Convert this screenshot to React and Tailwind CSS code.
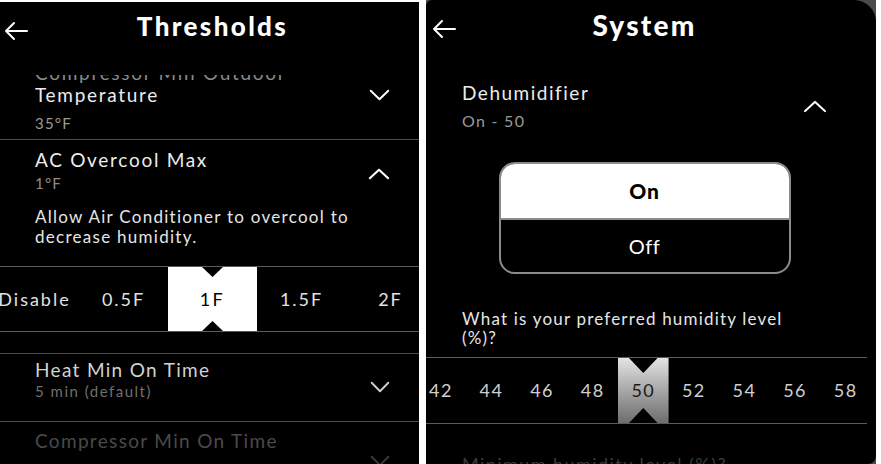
import React from "react";

const font = "font-['Lato','Open_Sans',sans-serif]";

function BackArrow() {
  return (
    <svg width="24" height="20" viewBox="0 0 24 20" fill="none">
      <path d="M23 10H2M10 2L2 10l8 8" stroke="white" strokeWidth="2" strokeLinecap="round" strokeLinejoin="round" />
    </svg>
  );
}

function Chevron({ up = false, color = "white", w = 21, h = 12 }) {
  return (
    <svg width={w} height={h} viewBox="0 0 24 14" fill="none" preserveAspectRatio="none">
      <path
        d={up ? "M2 12L12 2l10 10" : "M2 2l10 10 10-10"}
        stroke={color}
        strokeWidth="2.2"
        strokeLinecap="round"
        strokeLinejoin="round"
      />
    </svg>
  );
}

const overcoolSteps = ["Disable", "0.5F", "1F", "1.5F", "2F"];
const humiditySteps = [42, 44, 46, 48, 50, 52, 54, 56, 58];

function ThresholdsPanel() {
  return (
    <div className="w-[419px] h-[462px] mt-[2px] bg-black flex flex-col overflow-hidden shrink-0">
      <div className="grid grid-cols-[35px_1fr_29px] h-[73px] shrink-0 pt-[9px]">
        <div className="pl-[4px] pt-[10px]">
          <BackArrow />
        </div>
        <h1 className="text-center text-white text-[26px] leading-[30px] font-black tracking-[0.09em]">
          Thresholds
        </h1>
      </div>

      <div className="flex-1 overflow-hidden">
        {/* compressor min outdoor temp, partly scrolled under the header */}
        <div className="-mt-[13px] pl-[35px] pr-[29px] pb-[6px] border-b border-[#4d4d4d] flex justify-between items-start">
          <div>
            <div className="text-[19px] leading-[22px] tracking-[0.09em] text-[#8a8a8a]">Compressor Min Outdoor</div>
            <div className="text-[19px] leading-[22px] tracking-[0.09em] text-[#ececec]">Temperature</div>
            <div className="mt-[7px] text-[15px] leading-[20px] tracking-[0.08em] text-[#9a9a9a]">35°F</div>
          </div>
          <div className="mt-[27px]">
            <Chevron />
          </div>
        </div>

        {/* ac overcool max, expanded */}
        <div className="border-b border-[#4d4d4d] pb-[21px]">
          <div className="pt-[9px] pl-[35px] pr-[29px] flex justify-between items-start">
            <div>
              <div className="text-[19px] leading-[22px] tracking-[0.09em] text-[#ececec]">AC Overcool Max</div>
              <div className="mt-[2px] text-[15px] leading-[20px] tracking-[0.08em] text-[#8c8c8c]">1°F</div>
            </div>
            <div className="mt-[19px]">
              <Chevron up w={22} />
            </div>
          </div>
          <p className="mt-[14px] pl-[35px] pr-[29px] text-[17px] leading-[20px] tracking-[0.075em] text-[#e6e6e6]">
            Allow Air Conditioner to overcool to decrease humidity.
          </p>
          <div className="mt-[19px] h-[66px] border-y border-[#5a5a5a] overflow-hidden">
            <div className="flex h-full -ml-[10px]">
              {overcoolSteps.map((s) =>
                s === "1F" ? (
                  <div
                    key={s}
                    className="w-[89px] shrink-0 h-full bg-white text-black flex items-center justify-center text-[18px] tracking-[0.14em] [clip-path:polygon(0_0,34px_0,44.5px_10px,55px_0,100%_0,100%_100%,55px_100%,44.5px_calc(100%_-_10px),34px_100%,0_100%)]"
                  >
                    {s}
                  </div>
                ) : (
                  <div
                    key={s}
                    className="w-[89px] shrink-0 h-full text-[#e2e2e2] flex items-center justify-center text-[18px] tracking-[0.11em]"
                  >
                    {s}
                  </div>
                )
              )}
            </div>
          </div>
        </div>

        {/* heat min on time */}
        <div className="pt-[5px] pb-[20px] pl-[35px] pr-[29px] border-b border-[#4d4d4d] flex justify-between items-start">
          <div>
            <div className="text-[19px] leading-[22px] tracking-[0.07em] text-[#d2d2d2]">Heat Min On Time</div>
            <div className="text-[15px] leading-[20px] tracking-[0.1em] text-[#6f6f6f]">5 min (default)</div>
          </div>
          <div className="mt-[22px]">
            <Chevron color="#d0d0d0" w={20} />
          </div>
        </div>

        {/* compressor min on time, fading out at the bottom */}
        <div className="pt-[8px] pl-[35px] pr-[29px] flex justify-between items-start">
          <div className="text-[19px] leading-[22px] tracking-[0.07em] text-[#4a4a4a]">Compressor Min On Time</div>
          <div className="mt-[25px]">
            <Chevron color="#3a3a3a" w={20} />
          </div>
        </div>
      </div>
    </div>
  );
}

function SystemPanel() {
  return (
    <div className="w-[450px] h-[464px] ml-[7px] bg-[#4a4a4a] shrink-0">
      <div className="h-full bg-black rounded-tl-[6px] rounded-tr-[22px] rounded-br-[8px] flex flex-col overflow-hidden">
        <div className="grid grid-cols-[36px_1fr_49px] pt-[9px] shrink-0">
          <div className="pl-[6px] pt-[10px]">
            <BackArrow />
          </div>
          <h1 className="text-center text-white text-[28px] leading-[32px] font-black tracking-[0.08em]">System</h1>
        </div>

        <div className="pl-[36px] pr-[49px] flex flex-col">
          <div className="mt-[40px] flex justify-between items-start">
            <div>
              <div className="text-[19px] leading-[24px] tracking-[0.08em] text-[#ececec]">Dehumidifier</div>
              <div className="mt-[6px] text-[16px] leading-[20px] tracking-[0.08em] text-[#9a9a9a]">On - 50</div>
            </div>
            <div className="mt-[19px]">
              <Chevron up w={24} h={13} />
            </div>
          </div>

          <div className="mt-[31px] self-center w-[292px] h-[112px] rounded-[16px] border-2 border-[#8b8b8b] overflow-hidden flex flex-col">
            <div className="h-[54px] bg-white text-black flex items-center justify-center text-[21px] font-black tracking-[0.04em]">
              On
            </div>
            <div className="h-[2px] bg-[#8b8b8b]" />
            <div className="flex-1 text-white flex items-center justify-center text-[20px] tracking-[0.03em]">Off</div>
          </div>

          <p className="mt-[35px] text-[17px] leading-[19px] tracking-[0.07em] text-[#e6e6e6]">
            What is your preferred humidity level
            <br />
            (%)?
          </p>

          <div className="mt-[10px] -ml-[36px] -mr-[40px] h-[67px] border-y border-[#5a5a5a] overflow-hidden">
            <div className="flex h-full -ml-[10.4px]">
              {humiditySteps.map((n) =>
                n === 50 ? (
                  <div
                    key={n}
                    className="w-[50.6px] shrink-0 h-full bg-linear-to-b from-[#e4e4e4] to-[#6e6e6e] text-[#1a1a1a] flex items-center justify-center text-[18px] tracking-[0.08em] [clip-path:polygon(0_0,11px_0,25.3px_15px,39.6px_0,100%_0,100%_100%,39.6px_100%,25.3px_calc(100%_-_15px),11px_100%,0_100%)]"
                  >
                    {n}
                  </div>
                ) : (
                  <div
                    key={n}
                    className="w-[50.6px] shrink-0 h-full text-[#cfcfcf] flex items-center justify-center text-[18px] tracking-[0.08em]"
                  >
                    {n}
                  </div>
                )
              )}
            </div>
          </div>

          <div className="mt-[29px] text-[18px] leading-[22px] tracking-[0.08em] text-[#3a3a3a]">
            Minimum humidity level (%)?
          </div>
        </div>
      </div>
    </div>
  );
}

export default function App() {
  return (
    <div className={`w-[881px] h-[464px] bg-white flex overflow-hidden ${font}`}>
      <ThresholdsPanel />
      <SystemPanel />
    </div>
  );
}
